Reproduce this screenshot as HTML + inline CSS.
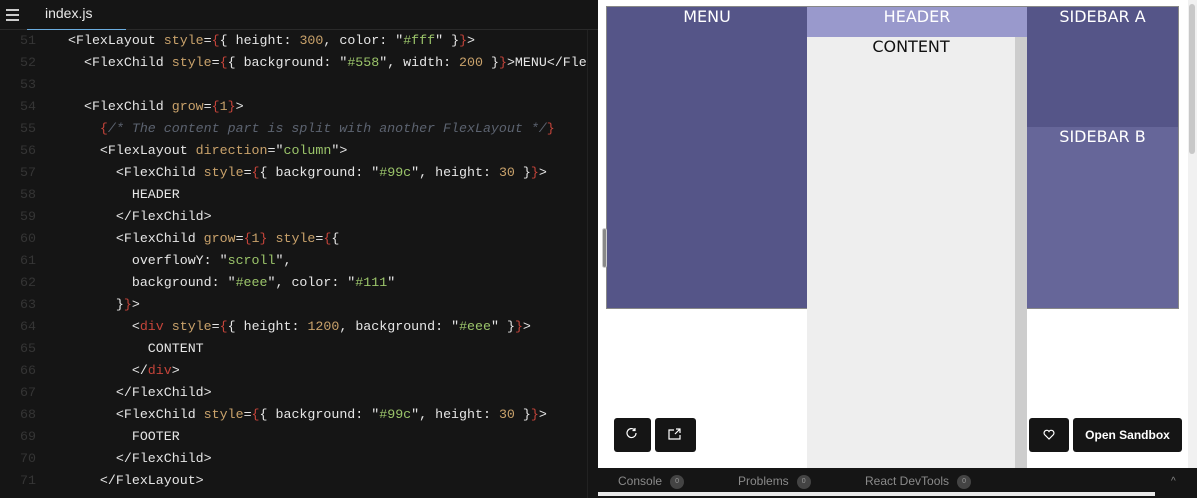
<!DOCTYPE html>
<html><head><meta charset="utf-8"><style>
*{margin:0;padding:0;box-sizing:border-box}
html,body{width:1197px;height:498px;overflow:hidden}
body{background:#151515;position:relative;font-family:"Liberation Sans",sans-serif}
.ed{position:absolute;left:0;top:0;width:598px;height:498px;background:#151515}
.tabs{height:30px;border-bottom:1px solid #2a2a2a;position:relative}
.tab{position:absolute;left:27px;top:0;width:99px;height:30px;border-bottom:1px solid #6caddf;color:#e8e8e8;font-size:14px;line-height:26px;padding-left:18px}
.ham{position:absolute;left:6px;top:9px;width:13px}
.ham i{display:block;height:2px;background:#ccc;margin-bottom:3px}
.code{position:absolute;left:0;top:30px;width:587px;overflow:hidden;font-family:"Liberation Mono",monospace;font-size:13.3px;color:#e6e6e6}
.ln{height:22px;line-height:22px;position:relative}
.n{position:absolute;left:0;width:36px;text-align:right;color:#353535}
.c{position:absolute;left:68px;white-space:pre}
.a{color:#c9a26b}.r{color:#c5443a}.s{color:#9bc46a}.m{color:#5c6370;font-style:italic}
.gut{position:absolute;left:587px;top:30px;width:1px;height:468px;background:#222}
.pv{position:absolute;left:598px;top:0;width:599px;height:468px;background:#fff}
.bar{position:absolute;left:598px;top:468px;width:599px;height:30px;background:#151515;color:#8a8a8a;font-size:12px}
.bar span{position:absolute;top:6px}
.b{display:inline-block;width:14px;height:14px;border-radius:7px;background:#444;color:#999;font-size:7px;text-align:center;line-height:14px;margin-left:8px;vertical-align:middle;font-style:normal}
.btn{position:absolute;top:418px;height:34px;background:#151515;border-radius:3px;color:#fff}
.lbl{position:absolute;font-family:"DejaVu Sans",sans-serif;font-size:16px;color:#fff;text-align:center;top:7px}
</style></head><body>
<div class="ed">
<div class="tabs"><div class="ham"><i></i><i></i><i></i></div><div class="tab">index.js</div></div>
<div class="code"><div class="ln"><span class="n">51</span><span class="c">&lt;FlexLayout <span class="a">style</span>=<span class="r">{</span>{ height: <span class="a">300</span>, color: "<span class="s">#fff</span>" }<span class="r">}</span>&gt;</span></div><div class="ln"><span class="n">52</span><span class="c">  &lt;FlexChild <span class="a">style</span>=<span class="r">{</span>{ background: "<span class="s">#558</span>", width: <span class="a">200</span> }<span class="r">}</span>&gt;MENU&lt;/FlexChild&gt;</span></div><div class="ln"><span class="n">53</span></div><div class="ln"><span class="n">54</span><span class="c">  &lt;FlexChild <span class="a">grow</span>=<span class="r">{</span><span class="a">1</span><span class="r">}</span>&gt;</span></div><div class="ln"><span class="n">55</span><span class="c">    <span class="r">{</span><span class="m">/* The content part is split with another FlexLayout */</span><span class="r">}</span></span></div><div class="ln"><span class="n">56</span><span class="c">    &lt;FlexLayout <span class="a">direction</span>="<span class="s">column</span>"&gt;</span></div><div class="ln"><span class="n">57</span><span class="c">      &lt;FlexChild <span class="a">style</span>=<span class="r">{</span>{ background: "<span class="s">#99c</span>", height: <span class="a">30</span> }<span class="r">}</span>&gt;</span></div><div class="ln"><span class="n">58</span><span class="c">        HEADER</span></div><div class="ln"><span class="n">59</span><span class="c">      &lt;/FlexChild&gt;</span></div><div class="ln"><span class="n">60</span><span class="c">      &lt;FlexChild <span class="a">grow</span>=<span class="r">{</span><span class="a">1</span><span class="r">}</span> <span class="a">style</span>=<span class="r">{</span>{</span></div><div class="ln"><span class="n">61</span><span class="c">        overflowY: "<span class="s">scroll</span>",</span></div><div class="ln"><span class="n">62</span><span class="c">        background: "<span class="s">#eee</span>", color: "<span class="s">#111</span>"</span></div><div class="ln"><span class="n">63</span><span class="c">      }<span class="r">}</span>&gt;</span></div><div class="ln"><span class="n">64</span><span class="c">        &lt;<span class="r">div</span> <span class="a">style</span>=<span class="r">{</span>{ height: <span class="a">1200</span>, background: "<span class="s">#eee</span>" }<span class="r">}</span>&gt;</span></div><div class="ln"><span class="n">65</span><span class="c">          CONTENT</span></div><div class="ln"><span class="n">66</span><span class="c">        &lt;/<span class="r">div</span>&gt;</span></div><div class="ln"><span class="n">67</span><span class="c">      &lt;/FlexChild&gt;</span></div><div class="ln"><span class="n">68</span><span class="c">      &lt;FlexChild <span class="a">style</span>=<span class="r">{</span>{ background: "<span class="s">#99c</span>", height: <span class="a">30</span> }<span class="r">}</span>&gt;</span></div><div class="ln"><span class="n">69</span><span class="c">        FOOTER</span></div><div class="ln"><span class="n">70</span><span class="c">      &lt;/FlexChild&gt;</span></div><div class="ln"><span class="n">71</span><span class="c">    &lt;/FlexLayout&gt;</span></div></div>
<div class="gut"></div>
</div>
<div class="pv">
<div style="position:absolute;left:8px;top:6px;width:573px;height:303px;border:1px solid #888"></div>
<div style="position:absolute;left:9px;top:7px;width:200px;height:301px;background:#558"></div>
<div style="position:absolute;left:209px;top:7px;width:220px;height:30px;background:#99c"></div>
<div style="position:absolute;left:209px;top:37px;width:208px;height:431px;background:#eee"></div>
<div style="position:absolute;left:417px;top:37px;width:12px;height:431px;background:#cdcdcd"></div>
<div style="position:absolute;left:429px;top:7px;width:151px;height:120px;background:#558"></div>
<div style="position:absolute;left:429px;top:127px;width:151px;height:181px;background:#669"></div>
<div class="lbl" style="left:9px;width:200px">MENU</div>
<div class="lbl" style="left:209px;width:220px">HEADER</div>
<div class="lbl" style="left:209px;width:208px;top:37px;color:#111">CONTENT</div>
<div class="lbl" style="left:429px;width:151px">SIDEBAR A</div>
<div class="lbl" style="left:429px;width:151px;top:127px">SIDEBAR B</div>
<div style="position:absolute;left:4px;top:228px;width:5px;height:40px;background:#888;border-radius:3px;border:1px solid #ccc"></div>
<div style="position:absolute;left:590px;top:0;width:9px;height:468px;background:#f1f1f1"></div>
<div style="position:absolute;left:591px;top:4px;width:6px;height:150px;background:#c8c8c8;border-radius:3px"></div>
<div class="btn" style="left:16px;width:37px"><svg width="37" height="34"><path d="M22 15a4.5 4.5 0 1 1-1.5-3.3M21 10v2.5h-2.5" fill="none" stroke="#fff" stroke-width="1.2"/></svg></div>
<div class="btn" style="left:57px;width:41px"><svg width="41" height="34"><path d="M19 12h-5v9h11v-4M21 11h4v4M25 11l-5 5" fill="none" stroke="#fff" stroke-width="1.2"/></svg></div>
<div class="btn" style="left:431px;width:40px"><svg width="40" height="34"><path d="M20 21l-4.5-4.5a2.6 2.6 0 0 1 4.5-3a2.6 2.6 0 0 1 4.5 3z" fill="none" stroke="#fff" stroke-width="1.2"/></svg></div>
<div class="btn" style="left:475px;width:109px;font-size:12px;font-weight:bold;text-align:center;line-height:34px">Open Sandbox</div>
</div>
<div class="bar">
<span style="left:20px">Console<i class="b">0</i></span>
<span style="left:140px">Problems<i class="b">0</i></span>
<span style="left:267px">React DevTools<i class="b">0</i></span>
<div style="position:absolute;left:0;top:24px;width:557px;height:4px;background:#e8e8e8"></div>
<span style="left:573px;top:8px;font-size:10px">^</span>
</div>
</body></html>
